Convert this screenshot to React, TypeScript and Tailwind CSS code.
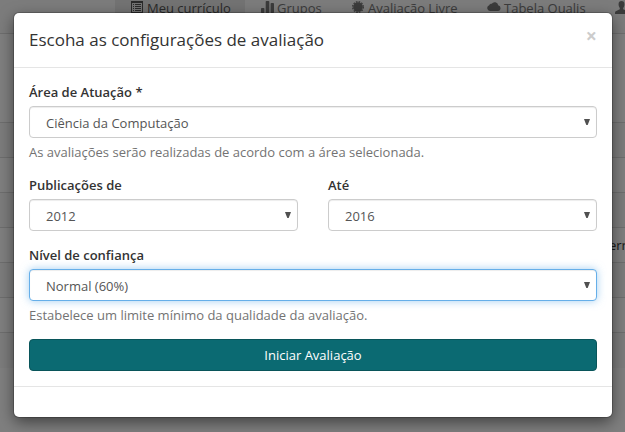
import React from "react";

function ListIcon() {
  return (
    <svg width="12" height="12" viewBox="0 0 12 12" fill="currentColor" shapeRendering="crispEdges">
      <path fillRule="evenodd" d="M0 0h12v12H0zM1 2h10v9H1z" />
      <path d="M2 3h1v1H2zM4 3h6v1H4zM2 5h1v1H2zM4 5h6v1H4zM2 7h1v1H2zM4 7h6v1H4zM2 9h1v1H2zM4 9h6v1H4z" />
    </svg>
  );
}

function StatsIcon() {
  return (
    <svg width="13" height="12" viewBox="0 0 13 12" fill="currentColor">
      <rect x="0" y="7" width="3.400" height="5" rx=".8" />
      <rect x="4.700" y="0" width="3.600" height="12" rx=".8" />
      <rect x="9.600" y="2" width="3.400" height="10" rx=".8" />
    </svg>
  );
}

function CertificateIcon() {
  return (
    <svg width="12" height="12" viewBox="-6 -6 12 12" fill="currentColor">
      <circle r="4.800" />
      <circle r="5.300" fill="none" stroke="currentColor" strokeWidth="1.400" strokeDasharray="1.600 1.175" />
    </svg>
  );
}

function CloudIcon() {
  return (
    <svg width="14" height="9" viewBox="0 0 14 9" fill="currentColor">
      <path d="M3 9a3 3 0 0 1-.8-5.800A2 2 0 0 1 4.700 1.800 3.600 3.600 0 0 1 11.200 3.300 2.900 2.900 0 0 1 11.200 9z" />
    </svg>
  );
}

function UserIcon() {
  return (
    <svg width="13" height="13" viewBox="0 0 13 13" fill="currentColor">
      <path d="M6.500 0C8.600 0 9.600 1.500 9.400 3.700 9.300 5.400 8.600 6.300 8.200 7v1.200l4 2c.6.400.8.900.8 2.800H0c0-1.900.2-2.400.8-2.800l4-2V7C4.400 6.300 3.700 5.400 3.600 3.700 3.400 1.500 4.400 0 6.500 0z" />
    </svg>
  );
}

function Backdrop() {
  const rows = [
    "bg-white",
    "bg-[#f9f9f9]",
    "bg-white",
    "bg-[#f9f9f9]",
    "bg-white",
    "bg-[#f9f9f9]",
    "bg-white",
    "bg-[#f9f9f9]",
  ];
  return (
    <div className="h-full w-full overflow-hidden bg-white text-[#777]">
      <nav className="flex h-[34px] border-b border-[#dcdcdc] bg-[#f8f8f8] pl-[115px] whitespace-nowrap">
        <div className="flex h-[33px] w-[130px] shrink-0 items-start gap-1 bg-[#e7e7e7] pt-[1px] pl-4 text-[#555]">
          <ListIcon />
          <span className="-mt-[2px]">Meu currículo</span>
        </div>
        <div className="flex w-[91px] shrink-0 items-start gap-[3px] pt-px pl-4">
          <StatsIcon />
          <span className="-mt-[2px]">Grupos</span>
        </div>
        <div className="flex w-[136px] shrink-0 items-start gap-[4px] pt-px pl-4">
          <CertificateIcon />
          <span className="-mt-[2px]">Avaliação Livre</span>
        </div>
        <div className="flex w-[128px] shrink-0 items-start gap-[3px] pt-[2px] pl-[15px]">
          <CloudIcon />
          <span className="-mt-[3px]">Tabela Qualis</span>
        </div>
        <div className="shrink-0 pt-px pl-[15px]">
          <UserIcon />
        </div>
      </nav>
      <div className="h-[54px]" />
      {rows.map((color, i) => (
        <div key={i} className={`flex h-[35px] border-b ${i === 7 ? "border-transparent" : "border-[#ddd]"} ${color}`}>
          {i === 4 && <span className="pt-2 pl-[609px] text-[#333]">err</span>}
        </div>
      ))}
    </div>
  );
}

function Select({ value, focused = false }: { value: string; focused?: boolean }) {
  return (
    <button
      className={`flex h-8 w-full items-center justify-between rounded-[4px] border bg-white pr-[6px] pl-4 text-[#555] ${
        focused
          ? "border-[#66afe9] shadow-[inset_0_1px_1px_rgba(0,0,0,0.075),0_0_8px_rgba(102,175,233,0.6)]"
          : "border-[#ccc] shadow-[inset_0_1px_1px_rgba(0,0,0,0.075)]"
      }`}
    >
      <span className="pt-[2px]">{value}</span>
      <svg className="mb-px" width="6" height="6" viewBox="0 0 6 6" fill="#505050">
        <path d="M0 0h6L3.700 6H2.300z" />
      </svg>
    </button>
  );
}

function Field({ label, value, focused, help }: { label: string; value: string; focused?: boolean; help?: string }) {
  return (
    <div className="flex-1">
      <div className="mb-[4px] h-[19px] pt-px font-semibold text-[#333]">{label}</div>
      <div className="pt-px">
        <Select value={value} focused={focused} />
      </div>
      {help && <p className="mt-[5px] h-[19px] text-[#737373]">{help}</p>}
    </div>
  );
}

export default function App() {
  return (
    <div className="relative h-[432px] w-[625px] overflow-hidden font-['Open_Sans',sans-serif] text-[13px] leading-[19px]">
      <Backdrop />
      <div className="absolute inset-0 bg-black/50 pt-[13px] pl-[14px]">
        <div className="flex h-[404px] w-[598px] flex-col rounded-[5px] bg-white shadow-[0_0_0_1px_rgba(0,0,0,0.2),0_5px_15px_rgba(0,0,0,0.5)]">
          <header className="flex h-[55px] items-start justify-between border-b border-[#e5e5e5] px-[15px] pt-[15px]">
            <h4 className="text-[17px] leading-6 text-[#333]">Escoha as configurações de avaliação</h4>
            <button className="-mt-px text-[19.500px] leading-[17px] font-bold text-[#ccc]">×</button>
          </header>
          <main className="px-[15px] pt-[14px] pb-[15px]">
            <Field
              label="Área de Atuação *"
              value="Ciência da Computação"
              help="As avaliações serão realizadas de acordo com a área selecionada."
            />
            <div className="mt-[13px] flex gap-[30px]">
              <Field label="Publicações de" value="2012" />
              <Field label="Até" value="2016" />
            </div>
            <div className="mt-[14px]">
              <Field
                label="Nível de confiança"
                value="Normal (60%)"
                focused
                help="Estabelece um limite mínimo da qualidade da avaliação."
              />
            </div>
            <button className="mt-[14px] block h-8 w-full rounded-[4px] border border-[#09555a] bg-[#0b6a72] text-white">
              Iniciar Avaliação
            </button>
          </main>
          <footer className="flex-1 border-t border-[#e5e5e5]" />
        </div>
      </div>
    </div>
  );
}
